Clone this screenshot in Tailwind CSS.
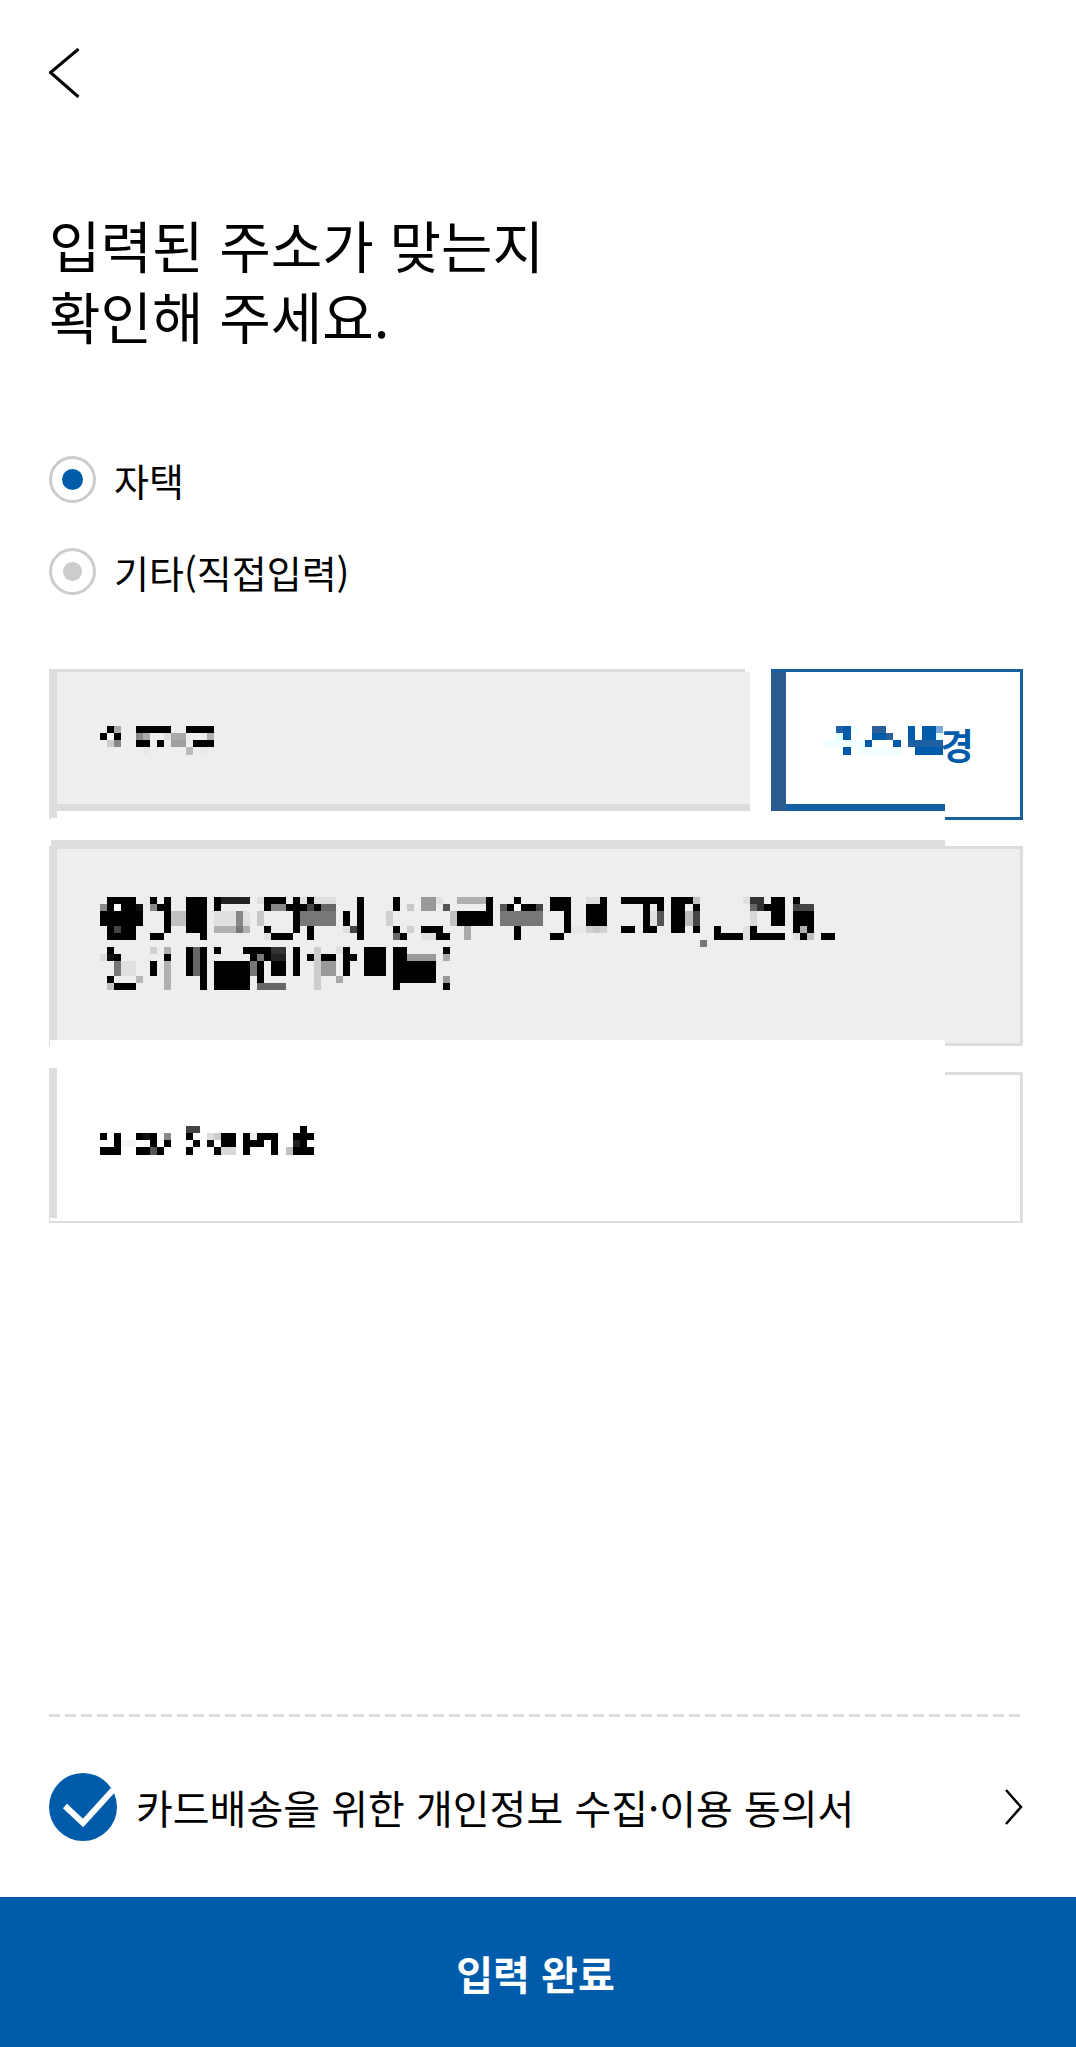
<!DOCTYPE html>
<html lang="ko">
  <head>
    <meta charset="UTF-8" />
    <meta name="viewport" content="width=device-width, initial-scale=1.0" />
    <title>입력된 주소 확인</title>
    <script src="https://cdn.jsdelivr.net/npm/@tailwindcss/browser@4"></script>
  </head>
  <body class="bg-white text-black font-['Noto_Sans_CJK_KR','Noto_Sans',sans-serif]">
    <div class="w-[1076px] h-[2047px] flex flex-col overflow-hidden">
      <!-- 뒤로가기 -->
      <div class="pl-[49px] pt-[48px] h-[97px]">
        <svg width="32" height="50" viewBox="0 0 32 50" fill="none" stroke="#000" stroke-width="3">
          <path d="M29.5 1 L1.5 24.5 L29.5 49" />
        </svg>
      </div>

      <h1 class="mt-[111px] ml-[49px] text-[56px] leading-[71px] font-normal">
        입력된 주소가 맞는지<br />확인해 주세요.
      </h1>

      <!-- 주소 구분 -->
      <div class="mt-[106px] ml-[49px] flex flex-col gap-[45px]">
        <label class="flex items-center gap-[18px] h-[47px]">
          <span class="w-[47px] h-[47px] rounded-full border-[3px] border-[#ccc] flex items-center justify-center">
            <span class="w-[21px] h-[21px] rounded-full bg-[#005cab]"></span>
          </span>
          <span class="text-[38px]">자택</span>
        </label>
        <label class="flex items-center gap-[18px] h-[47px]">
          <span class="w-[47px] h-[47px] rounded-full border-[3px] border-[#ccc] flex items-center justify-center">
            <span class="w-[19px] h-[19px] rounded-full bg-[#ccc]"></span>
          </span>
          <span class="text-[38px]">기타(직접입력)</span>
        </label>
      </div>

      <!-- 주소 입력 -->
      <div class="mt-[74px] mx-[49px] w-[974px]">
        <div class="flex gap-[21px] h-[151px]">
          <div class="relative w-[701px]">
            <div class="h-[142px] border-t-[3px] border-l-8 border-b-[7px] border-[#ddd] bg-[#eee] pl-[43px] pt-[54px]">
              <svg id="m-zip" class="block"></svg>
            </div>
            <div class="absolute right-0 top-0 w-[5px] h-[3px] bg-white"></div>
            <div class="absolute left-0 top-[142px] w-2 h-[7px] bg-[#ddd]"></div>
            <div class="absolute left-0 top-[149px] w-px h-[2px] bg-[#ddd]"></div>
          </div>
          <div class="relative w-[252px] border-[3px] border-[#1a5f9f]">
            <div class="flex pl-[48px] pt-[54px]">
              <svg id="m-btn" class="block shrink-0"></svg>
              <span class="text-[36px] leading-[40px] font-bold text-[#005cab] -mt-[2px] -ml-[3px]">경</span>
            </div>
            <div class="absolute -left-[3px] top-0 w-[15px] h-[139px] bg-[#2b5c8f]"></div>
            <div class="absolute left-[12px] top-[132px] w-[159px] h-[7px] bg-[#1560a4]"></div>
            <div class="absolute -left-[3px] top-[139px] w-[174px] h-[9px] bg-white"></div>
          </div>
        </div>

        <div class="relative mt-[26px] h-[200px] border-[3px] border-[#ddd] bg-[#eee] pl-[48px] pt-[48px]">
          <svg id="m-addr" class="block"></svg>
          <div class="absolute -left-[3px] top-0 w-[8px] h-[191px] bg-[#ddd]"></div>
          <div class="absolute -left-[1px] -top-[9px] w-[894px] h-[7px] bg-[#ddd]"></div>
          <div class="absolute -left-[2px] top-[191px] w-[895px] h-[6px] bg-white"></div>
        </div>

        <div class="relative mt-[26px] h-[151px] border-[3px] border-b-2 border-[#ddd] bg-white pl-[48px] pt-[51px]">
          <svg id="m-detail" class="block"></svg>
          <div class="absolute -left-[3px] -top-[7px] w-[8px] h-[150px] bg-[#ddd]"></div>
          <div class="absolute left-[5px] -top-[3px] w-[888px] h-[3px] bg-white"></div>
          <div class="absolute -left-[2px] top-[143px] w-[2px] h-[3px] bg-white"></div>
        </div>
      </div>

      <div class="flex-1"></div>

      <!-- 동의 -->
      <div class="mx-[49px] w-[971px] h-[3px] bg-[repeating-linear-gradient(90deg,#ddd_0,#ddd_11px,transparent_11px,transparent_16px)]"></div>
      <div class="mt-[56px] mx-[49px] w-[974px] h-[68px] flex items-center">
        <svg class="shrink-0" width="68" height="68" viewBox="0 0 68 68">
          <circle cx="34" cy="34" r="34" fill="#005cab" />
          <path d="M16 33 L34 50 L64 17" fill="none" stroke="#fff" stroke-width="6" />
        </svg>
        <span class="ml-[19px] text-[40px] leading-[68px] whitespace-nowrap">카드배송을 위한 개인정보 수집·이용 동의서</span>
        <svg class="ml-auto shrink-0" width="20" height="36" viewBox="0 0 20 36" fill="none" stroke="#000" stroke-width="2.5">
          <path d="M3 1 L18 18 L3 35" />
        </svg>
      </div>

      <button class="mt-[56px] w-full h-[150px] bg-[#005cab] text-white text-[40px] font-bold flex items-center justify-center pr-[5px] pt-[2px]">
        입력 완료
      </button>
    </div>

    <script>
      // 마스킹(모자이크) 처리된 값: [row, col, width, color]
      const K = "#000";
      const zip = [
        [0,1,1,K],[0,2,1,"#aaa"],[0,5,5,K],[0,12,4,K],
        [1,0,1,K],[1,1,1,"#f8f8f8"],[1,2,1,K],[1,5,1,"#888"],[1,6,1,"#aaa"],[1,9,1,"#ddd"],[1,10,2,"#aaa"],[1,15,1,"#b0b0b0"],
        [2,1,1,"#ccc"],[2,2,1,"#888"],[2,5,2,K],[2,8,1,K],[2,10,2,"#a0a0a0"],[2,13,3,K],
        [3,6,1,"#e8e8e8"],[3,12,1,"#bbb"],[3,14,1,"#e8e8e8"],
      ];
      const btn = [
        [0,2,1,"#1f5fa3"],[0,3,1,"#005cab"],[0,4,1,"#f0ffff"],[0,7,2,"#2a5f99"],[0,12,1,"#005cab"],[0,14,2,"#005cab"],[0,16,1,"#7aabdd"],
        [1,2,1,"#e0ffff"],[1,3,1,"#005cab"],[1,7,2,"#005cab"],[1,9,1,"#2a5f99"],[1,12,1,"#005cab"],[1,14,2,"#005cab"],[1,16,1,"#e8ffff"],
        [2,0,6,"#f0ffff"],[2,6,1,"#005cab"],[2,10,1,"#005cab"],[2,12,5,"#1f5fa3"],
        [3,3,1,"#005cab"],[3,5,6,"#f0ffff"],[3,13,4,"#005cab"],
      ];
      const addr = [
        [0,1,4,K],[0,7,1,K],[0,9,1,K],[0,12,3,K],[0,16,1,K],[0,17,4,"#222"],[0,22,1,"#ddd"],[0,23,3,K],[0,27,1,K],[0,28,1,"#e0e0e0"],[0,29,1,K],[0,30,3,"#ddd"],[0,36,1,K],[0,41,1,K],[0,45,2,"#999"],[0,47,1,"#e0e0e0"],[0,50,4,"#b0b0b0"],[0,54,1,K],[0,58,1,K],[0,63,3,K],[0,68,2,"#ddd"],[0,70,1,K],[0,73,6,K],[0,80,3,K],[0,83,1,"#c0c0c0"],[0,90,1,"#e0e0e0"],[0,91,2,"#333"],[0,94,2,K],[0,97,1,K],
        [1,0,1,"#888"],[1,1,1,K],[1,2,1,"#fff"],[1,3,2,K],[1,5,1,"#111"],[1,7,1,"#888"],[1,8,2,K],[1,12,3,K],[1,16,1,K],[1,23,1,K],[1,24,2,"#888"],[1,26,3,K],[1,29,1,"#444"],[1,30,1,K],[1,31,2,"#666"],[1,36,1,K],[1,41,1,K],[1,43,1,"#c8c8c8"],[1,45,2,"#999"],[1,48,1,"#555"],[1,54,1,K],[1,56,1,"#555"],[1,57,1,K],[1,58,1,"#fff"],[1,59,2,K],[1,61,1,"#444"],[1,63,3,K],[1,68,3,K],[1,76,1,K],[1,78,1,K],[1,80,2,K],[1,83,1,K],[1,91,1,"#666"],[1,92,1,"#333"],[1,93,3,K],[1,97,3,"#444"],
        [2,0,6,K],[2,9,1,K],[2,10,2,"#c0c0c0"],[2,12,3,K],[2,16,3,"#e0e0e0"],[2,19,1,"#888"],[2,20,1,"#e0e0e0"],[2,22,1,"#c8c8c8"],[2,27,1,K],[2,28,5,"#777"],[2,34,1,K],[2,36,1,K],[2,40,1,"#d0d0d0"],[2,49,1,"#c0c0c0"],[2,50,5,K],[2,56,6,"#777"],[2,65,1,K],[2,68,3,K],[2,76,1,K],[2,77,1,"#e0e0e0"],[2,78,1,"#555"],[2,80,2,K],[2,82,1,"#bbb"],[2,83,1,"#444"],[2,91,1,"#d8d8d8"],[2,94,2,K],[2,97,3,K],
        [3,0,6,K],[3,9,1,K],[3,10,2,"#c0c0c0"],[3,12,3,K],[3,16,3,"#e0e0e0"],[3,19,1,"#888"],[3,20,1,"#e0e0e0"],[3,22,1,"#c8c8c8"],[3,27,1,K],[3,28,5,"#777"],[3,34,1,K],[3,36,1,K],[3,40,1,"#d0d0d0"],[3,49,1,"#c0c0c0"],[3,50,5,K],[3,56,6,"#777"],[3,65,1,K],[3,68,3,K],[3,76,1,K],[3,77,1,"#e0e0e0"],[3,78,1,"#555"],[3,80,2,K],[3,82,1,"#bbb"],[3,83,1,"#444"],[3,91,1,"#d8d8d8"],[3,94,2,K],[3,97,3,K],
        [4,1,1,K],[4,2,1,"#444"],[4,3,2,K],[4,9,1,K],[4,12,3,K],[4,16,3,"#b0b0b0"],[4,19,1,"#777"],[4,20,1,"#b0b0b0"],[4,23,1,K],[4,27,1,K],[4,29,1,K],[4,34,1,"#e0e0e0"],[4,35,1,"#444"],[4,36,1,K],[4,41,1,K],[4,43,1,"#d0d0d0"],[4,45,3,K],[4,51,1,"#aaa"],[4,58,1,K],[4,65,1,K],[4,66,2,"#e8e8e8"],[4,68,1,"#d0d0d0"],[4,69,1,"#c8c8c8"],[4,70,1,"#d0d0d0"],[4,73,2,K],[4,76,2,K],[4,80,2,K],[4,83,1,K],[4,86,1,K],[4,90,1,"#e0e0e0"],[4,91,1,K],[4,97,1,K],[4,98,1,"#b0b0b0"],[4,99,1,K],
        [5,1,4,K],[5,7,2,K],[5,14,1,K],[5,23,1,"#e0e0e0"],[5,24,3,K],[5,29,1,K],[5,36,1,K],[5,41,1,"#666"],[5,42,1,K],[5,45,2,"#e0e0e0"],[5,47,2,K],[5,51,1,"#aaa"],[5,58,1,K],[5,63,2,K],[5,86,4,K],[5,90,1,"#e0e0e0"],[5,91,5,K],[5,97,1,"#e0e0e0"],[5,98,1,K],[5,99,1,"#c0c0c0"],[5,101,2,K],
        [6,84,1,"#777"],
        [7,1,1,K],[7,7,1,"#d0d0d0"],[7,9,1,"#b0b0b0"],[7,12,1,K],[7,13,1,"#666"],[7,14,1,K],[7,16,1,K],[7,20,4,K],[7,24,2,"#333"],[7,27,1,K],[7,30,1,"#ccc"],[7,33,1,"#e0e0e0"],[7,34,1,K],[7,37,3,K],[7,41,2,K],[7,48,1,K],
        [8,0,1,"#ddd"],[8,1,1,"#111"],[8,2,1,K],[8,9,1,K],[8,12,1,K],[8,13,1,"#666"],[8,14,1,K],[8,21,1,K],[8,22,1,"#777"],[8,23,1,K],[8,24,2,"#222"],[8,27,1,K],[8,29,1,K],[8,30,1,"#ccc"],[8,31,2,K],[8,34,2,K],[8,37,3,K],[8,41,2,K],[8,43,4,"#999"],[8,48,1,"#aaa"],
        [9,2,1,"#777"],[9,3,2,"#e0e0e0"],[9,7,1,K],[9,9,1,"#b0b0b0"],[9,12,1,K],[9,13,1,"#666"],[9,14,1,K],[9,16,5,K],[9,21,1,"#777"],[9,22,1,K],[9,24,2,K],[9,27,1,K],[9,30,1,"#ccc"],[9,31,2,"#999"],[9,34,1,K],[9,37,3,K],[9,41,6,K],
        [10,2,1,"#777"],[10,3,2,"#e0e0e0"],[10,7,1,K],[10,9,1,"#b0b0b0"],[10,12,1,K],[10,13,1,"#666"],[10,14,1,K],[10,16,5,K],[10,21,1,"#777"],[10,22,1,K],[10,24,2,K],[10,27,1,K],[10,30,1,"#ccc"],[10,31,2,"#999"],[10,34,1,K],[10,37,3,K],[10,41,6,K],
        [11,1,1,K],[11,5,1,"#b8b8b8"],[11,9,1,"#b0b0b0"],[11,14,1,K],[11,16,5,K],[11,22,1,K],[11,30,1,"#ccc"],[11,33,1,"#aaa"],[11,41,6,K],[11,48,1,"#999"],
        [12,1,1,"#c0c0c0"],[12,2,3,K],[12,9,1,"#b0b0b0"],[12,14,1,K],[12,16,5,K],[12,22,4,"#666"],[12,30,1,"#ccc"],[12,41,1,K],[12,48,1,K],
      ];
      const detail = [
        [0,12,2,"#444"],[0,28,1,K],
        [1,0,1,K],[1,2,1,K],[1,5,1,K],[1,6,1,"#111"],[1,7,1,K],[1,9,1,"#888"],[1,12,1,K],[1,15,1,"#ddd"],[1,16,1,"#ccc"],[1,17,2,K],[1,20,1,K],[1,21,1,"#f0f0f0"],[1,22,3,K],[1,27,3,K],
        [2,2,1,K],[2,3,2,"#f5f5f5"],[2,7,1,K],[2,9,1,K],[2,13,1,K],[2,15,1,"#111"],[2,17,2,K],[2,20,3,K],[2,24,1,K],[2,27,1,"#222"],[2,28,1,K],
        [3,0,3,K],[3,5,2,K],[3,7,1,"#555"],[3,8,1,K],[3,12,1,K],[3,16,1,K],[3,17,2,"#d8d8d8"],[3,20,1,K],[3,24,1,K],[3,26,1,"#c0c0c0"],[3,27,3,K],
      ];

      function drawMosaic(id, cells, cols, rows) {
        const svg = document.getElementById(id);
        svg.setAttribute("width", cols * 7.14);
        svg.setAttribute("height", rows * 7.14);
        svg.setAttribute("viewBox", `0 0 ${cols} ${rows}`);
        svg.setAttribute("shape-rendering", "crispEdges");
        svg.innerHTML = cells
          .map(([r, c, w, color]) => `<rect x="${c}" y="${r}" width="${w}" height="1" fill="${color}"></rect>`)
          .join("");
      }

      drawMosaic("m-zip", zip, 16, 4);
      drawMosaic("m-btn", btn, 17, 4);
      drawMosaic("m-addr", addr, 103, 13);
      drawMosaic("m-detail", detail, 30, 4);
    </script>
  </body>
</html>
